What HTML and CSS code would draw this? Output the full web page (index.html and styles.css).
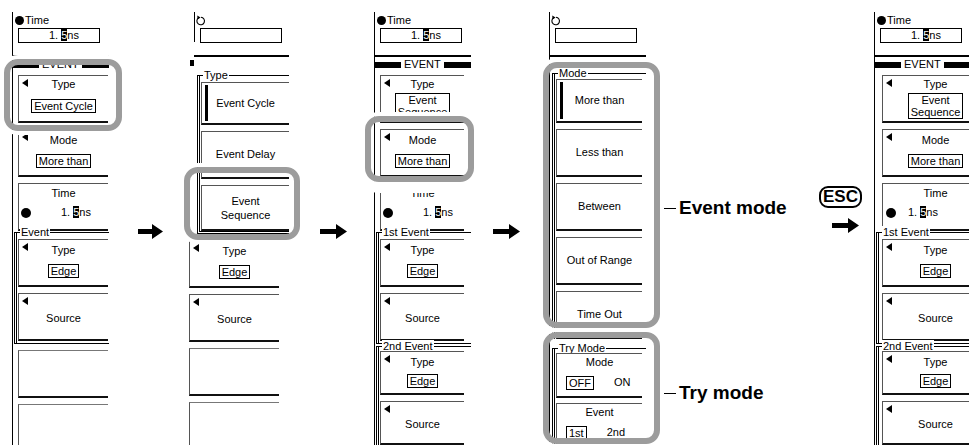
FILE: index.html
```html
<!DOCTYPE html>
<html lang="en">
<head>
  <meta charset="UTF-8">
  <title>Event trigger menus</title>
  <link rel="stylesheet" href="styles.css">
</head>
<body>
  <div class="stage">

    <!-- step 1: event menu, Type highlighted -->
    <section class="panel p1">
      <div class="screen">
        <div class="head">
          <div class="head-label"><i class="dot"></i>Time</div>
          <div class="value-box">1. <span class="cur">5</span>ns</div>
        </div>
        <div class="rule"></div>
        <div class="band"><span class="bar bar-l"></span><span class="band-text">EVENT</span><span class="bar"></span></div>
        <div class="key first">
          <i class="tri"></i>
          <div class="key-title">Type</div>
          <div class="key-value"><span class="boxed">Event Cycle</span></div>
        </div>
        <div class="key">
          <i class="tri"></i>
          <div class="key-title">Mode</div>
          <div class="key-value"><span class="boxed">More than</span></div>
        </div>
        <div class="key key-time">
          <div class="key-title">Time</div>
          <div class="time-row"><i class="dot big"></i><span class="time-val">1. <span class="cur">5</span>ns</span></div>
        </div>
        <div class="group">
          <span class="group-label">Event</span>
          <div class="key">
            <i class="tri"></i>
            <div class="key-title">Type</div>
            <div class="key-value"><span class="boxed">Edge</span></div>
          </div>
          <div class="key key-source">
            <i class="tri"></i>
            <div class="key-title">Source</div>
          </div>
        </div>
        <div class="key blank"></div>
        <div class="key blank"></div>
      </div>
      <div class="ring ring-1"></div>
    </section>

    <div class="arrow a1"><svg width="25" height="15" viewBox="0 0 25 15"><path d="M0 5h14V0l11 7.5L14 15v-5H0z"/></svg></div>

    <!-- step 2: type list popup -->
    <section class="panel p2">
      <div class="screen screen-open">
        <div class="head head-knob">
          <div class="head-label"><svg class="knob" width="10" height="11" viewBox="0 0 10 11"><path d="M2.6 2.8A3.8 3.8 0 1 0 5 2.2" fill="none" stroke="#000" stroke-width="1.1"/><path d="M1.2 0.6L4.6 2.6L1.6 4.6z"/></svg></div>
          <div class="value-box"></div>
        </div>
        <div class="rule"></div>
        <div class="stub"></div>
        <div class="popup">
          <span class="group-label">Type</span>
          <div class="item item-first"><i class="sel"></i>Event Cycle</div>
          <div class="item">Event Delay</div>
          <div class="item item-two">Event<br>Sequence</div>
        </div>
        <div class="under">
          <div class="key">
            <i class="tri"></i>
            <div class="key-title">Type</div>
            <div class="key-value"><span class="boxed">Edge</span></div>
          </div>
          <div class="key key-source">
            <i class="tri"></i>
            <div class="key-title">Source</div>
          </div>
          <div class="key blank"></div>
          <div class="key blank"></div>
        </div>
      </div>
      <div class="ring ring-2"></div>
    </section>

    <div class="arrow a2"><svg width="27" height="15" viewBox="0 0 27 15"><path d="M0 5h16V0l11 7.5L16 15v-5H0z"/></svg></div>

    <!-- step 3: event sequence menu, Mode highlighted -->
    <section class="panel p3">
      <div class="screen">
        <div class="head">
          <div class="head-label"><i class="dot"></i>Time</div>
          <div class="value-box">1. <span class="cur">5</span>ns</div>
        </div>
        <div class="rule"></div>
        <div class="band"><span class="bar bar-l"></span><span class="band-text">EVENT</span><span class="bar"></span></div>
        <div class="key first">
          <i class="tri"></i>
          <div class="key-title">Type</div>
          <div class="key-value"><span class="boxed">Event<br>Sequence</span></div>
        </div>
        <div class="key">
          <i class="tri"></i>
          <div class="key-title">Mode</div>
          <div class="key-value"><span class="boxed">More than</span></div>
        </div>
        <div class="key key-time">
          <div class="key-title">Time</div>
          <div class="time-row"><i class="dot big"></i><span class="time-val">1. <span class="cur">5</span>ns</span></div>
        </div>
        <div class="group">
          <span class="group-label">1st Event</span>
          <div class="key">
            <i class="tri"></i>
            <div class="key-title">Type</div>
            <div class="key-value"><span class="boxed">Edge</span></div>
          </div>
          <div class="key key-source">
            <i class="tri"></i>
            <div class="key-title">Source</div>
          </div>
        </div>
        <div class="group group-2">
          <span class="group-label">2nd Event</span>
          <div class="key">
            <i class="tri"></i>
            <div class="key-title">Type</div>
            <div class="key-value"><span class="boxed">Edge</span></div>
          </div>
          <div class="key key-source">
            <i class="tri"></i>
            <div class="key-title">Source</div>
          </div>
        </div>
      </div>
      <div class="ring ring-3"></div>
    </section>

    <div class="arrow a3"><svg width="27" height="15" viewBox="0 0 27 15"><path d="M0 5h16V0l11 7.5L16 15v-5H0z"/></svg></div>

    <!-- step 4: mode list and try mode -->
    <section class="panel p4">
      <div class="screen screen-open">
        <div class="head head-knob">
          <div class="head-label"><svg class="knob" width="10" height="11" viewBox="0 0 10 11"><path d="M2.6 2.8A3.8 3.8 0 1 0 5 2.2" fill="none" stroke="#000" stroke-width="1.1"/><path d="M1.2 0.6L4.6 2.6L1.6 4.6z"/></svg></div>
          <div class="value-box"></div>
        </div>
        <div class="rule"></div>
        <div class="list">
          <span class="group-label">Mode</span>
          <div class="item item-first"><i class="sel"></i>More than</div>
          <div class="item">Less than</div>
          <div class="item">Between</div>
          <div class="item">Out of Range</div>
          <div class="item">Time Out</div>
        </div>
        <div class="list list-try">
          <span class="group-label">Try Mode</span>
          <div class="item item-pair">
            <div class="pair-title">Mode</div>
            <div class="pair-row"><span class="boxed">OFF</span><span>ON</span></div>
          </div>
          <div class="item item-pair">
            <div class="pair-title">Event</div>
            <div class="pair-row"><span class="boxed">1st</span><span>2nd</span></div>
          </div>
        </div>
      </div>
      <div class="ring ring-4a"></div>
      <div class="ring ring-4b"></div>
    </section>

    <div class="callouts">
      <div class="callout c-mode"><i class="lead"></i>Event mode</div>
      <div class="callout c-try"><i class="lead"></i>Try mode</div>
    </div>

    <div class="esc-col">
      <div class="esc">ESC</div>
      <div class="arrow a4"><svg width="27" height="15" viewBox="0 0 27 15"><path d="M0 5h16V0l11 7.5L16 15v-5H0z"/></svg></div>
    </div>

    <!-- step 5: back to event menu -->
    <section class="panel p5">
      <div class="screen">
        <div class="head">
          <div class="head-label"><i class="dot"></i>Time</div>
          <div class="value-box">1. <span class="cur">5</span>ns</div>
        </div>
        <div class="rule"></div>
        <div class="band"><span class="bar bar-l"></span><span class="band-text">EVENT</span><span class="bar"></span></div>
        <div class="key first">
          <i class="tri"></i>
          <div class="key-title">Type</div>
          <div class="key-value"><span class="boxed">Event<br>Sequence</span></div>
        </div>
        <div class="key">
          <i class="tri"></i>
          <div class="key-title">Mode</div>
          <div class="key-value"><span class="boxed">More than</span></div>
        </div>
        <div class="key key-time">
          <div class="key-title">Time</div>
          <div class="time-row"><i class="dot big"></i><span class="time-val">1. <span class="cur">5</span>ns</span></div>
        </div>
        <div class="group">
          <span class="group-label">1st Event</span>
          <div class="key">
            <i class="tri"></i>
            <div class="key-title">Type</div>
            <div class="key-value"><span class="boxed">Edge</span></div>
          </div>
          <div class="key key-source">
            <i class="tri"></i>
            <div class="key-title">Source</div>
          </div>
        </div>
        <div class="group group-2">
          <span class="group-label">2nd Event</span>
          <div class="key">
            <i class="tri"></i>
            <div class="key-title">Type</div>
            <div class="key-value"><span class="boxed">Edge</span></div>
          </div>
          <div class="key key-source">
            <i class="tri"></i>
            <div class="key-title">Source</div>
          </div>
        </div>
      </div>
    </section>

  </div>
</body>
</html>
```

FILE: styles.css
```css
body {
  margin: 0;
  background: #fff;
  font-family: "Liberation Sans", Arial, sans-serif;
  color: #000;
}

.stage {
  display: flex;
  align-items: flex-start;
  width: 971px;
  height: 445px;
  overflow: hidden;
}

/* ---- menu panels ---- */

.panel {
  --kw: 90px;
  --tv: 30px;
  position: relative;
  flex: none;
  padding-top: 12px;
}

.screen {
  height: 433px;
  overflow: hidden;
  border-left: 1px solid #000;
  font-size: 11px;
  line-height: 13px;
}

.p1 { margin-left: 12px; }
.p1 .screen { width: 96px; }
.p2 { margin-left: 26px; }
.p2 .screen { width: 100px; border-left: none; }
.p3 { --kw: 84px; margin-left: 27px; }
.p3 .screen { width: 96px; }
.p4 { margin-left: 29px; }
.p4 .screen { width: 96px; }
.p5 { --kw: 106px; --tv: 12px; margin-left: 7px; }
.p5 .screen { width: 94px; }

.head {
  height: 30px;
}

.head-label {
  display: flex;
  align-items: center;
  gap: 1px;
  height: 16px;
  margin-left: 2px;
}

.dot {
  display: inline-block;
  width: 9px;
  height: 9px;
  border-radius: 50%;
  background: #000;
}

.dot.big {
  flex: none;
  width: 10px;
  height: 10px;
}

.value-box {
  box-sizing: border-box;
  width: 82px;
  height: 15px;
  margin-left: 5px;
  border: 1px solid #000;
  padding-left: 10px;
  text-align: center;
  line-height: 13px;
}

.cur {
  background: #000;
  color: #fff;
}

.rule {
  height: 2px;
  margin-top: 13px;
  background: #000;
}

.band {
  display: flex;
  align-items: center;
  height: 11px;
  margin-top: 2px;
}

.bar {
  flex: 1;
  height: 6px;
  background: #000;
}

.bar-l {
  flex: none;
  width: 26px;
}

.band-text {
  padding: 0 3px;
  line-height: 11px;
}

/* ---- soft keys ---- */

.key {
  position: relative;
  box-sizing: border-box;
  display: flex;
  flex-direction: column;
  width: var(--kw);
  height: 48px;
  margin: 6px 0 0 5px;
  border-top: 1px solid #555;
  border-left: 1px solid #555;
  border-bottom: 2px solid #111;
  text-align: center;
}

.key.first {
  margin-top: 5px;
}

.key.first .key-title {
  padding-top: 1px;
}

.p5 .key {
  margin-left: 7px;
}

.tri {
  position: absolute;
  left: 3px;
  top: 3px;
  width: 0;
  height: 0;
  border-top: 4px solid transparent;
  border-bottom: 4px solid transparent;
  border-right: 6px solid #000;
}

.key-title {
  padding-top: 3px;
  line-height: 14px;
}

.key-value {
  flex: 1;
  display: flex;
  align-items: center;
  justify-content: center;
}

.boxed {
  border: 1px solid #000;
  padding: 0 2px;
  line-height: 12px;
}

.key-time .key-title {
  padding-top: 2px;
}

.time-row {
  display: flex;
  align-items: center;
  margin-top: 6px;
  padding-left: 2px;
}

.p5 .time-row {
  padding-left: 3px;
}

.time-val {
  margin-left: var(--tv);
}

.key-source .key-title {
  padding-top: 17px;
}

.blank {
  border-top-color: #777;
}

.group {
  position: relative;
  margin: 1px 0 0 1px;
  padding: 0 0 2px;
  border-top: 1px solid #000;
  border-left: 3px double #000;
  border-bottom: 1px solid #000;
}

.group .key {
  margin-left: 1px;
}

.p5 .group .key {
  margin-left: 3px;
}

.group-2 {
  margin-top: 2px;
  border-bottom: none;
}

.group-2 .key {
  height: 44px;
  margin-top: 4px;
}

.group-2 .key-source {
  margin-top: 6px;
}

.group-2 .key-source .key-title {
  padding-top: 15px;
}

.group-label {
  position: absolute;
  top: -7px;
  left: 3px;
  padding: 0 1px;
  background: #fff;
  line-height: 13px;
}

/* ---- popup lists ---- */

.head-knob .head-label {
  margin-left: 1px;
}

.p2 .head {
  margin-left: 5px;
  border-left: 1px solid #000;
}

.p2 .rule {
  margin-left: 5px;
}

.stub {
  width: 4px;
  height: 6px;
  margin: 3px 0 0 1px;
  background: #000;
}

.popup {
  position: relative;
  margin: 9px 0 0 8px;
  border-top: 1px solid #000;
  border-left: 3px double #000;
  border-bottom: 3px double #000;
}

.item {
  position: relative;
  box-sizing: border-box;
  display: flex;
  align-items: center;
  justify-content: center;
  width: 88px;
  height: 48px;
  margin: 6px 0 0 1px;
  border-top: 1px solid #555;
  border-left: 1px solid #555;
  border-bottom: 2px solid #111;
  text-align: center;
}

.item-first {
  height: 43px;
}

.item-two {
  height: 46px;
  line-height: 14px;
}

.sel {
  position: absolute;
  left: 3px;
  top: 2px;
  bottom: 2px;
  width: 3px;
  background: #000;
}

.under .key {
  margin-left: 0;
}

.list {
  position: relative;
  margin: 16px 0 0 2px;
  border-top: 1px solid #000;
  border-left: 3px double #000;
}

.list .item {
  width: 86px;
  margin-left: 1px;
}

.list .item-first {
  margin-top: 5px;
  height: 44px;
}

.list-try {
  margin-top: 9px;
}

.item-pair {
  flex-direction: column;
  justify-content: flex-start;
  align-items: stretch;
  height: 45px;
}

.list-try .item-pair {
  margin-top: 5px;
}

.list-try .item-pair:first-of-type {
  margin-top: 4px;
}

.pair-title {
  padding-top: 2px;
  line-height: 13px;
}

.pair-row {
  display: flex;
  gap: 20px;
  margin-top: 7px;
  padding-left: 9px;
}

/* ---- highlight rings ---- */

.ring {
  position: absolute;
  box-sizing: border-box;
  border: 6px solid #9c9c9c;
  border-radius: 14px;
  box-shadow: 0 0 0 4px #fff;
}

.ring-1 { left: -8px; top: 59px; width: 118px; height: 72px; }
.ring-2 { left: -5px; top: 167px; width: 116px; height: 73px; }
.ring-3 {
  left: -9px;
  top: 116px;
  width: 109px;
  height: 66px;
  box-shadow: 0 0 0 4px #fff, 0 7px 0 4px #fff;
}
.ring-4a { left: -6px; top: 62px; width: 117px; height: 266px; }
.ring-4b { left: -6px; top: 332px; width: 117px; height: 112px; }

/* ---- arrows and callouts ---- */

.arrow {
  flex: none;
  line-height: 0;
}

.a1 { margin: 224px 0 0 29px; }
.a2 { margin: 224px 0 0 31px; }
.a3 { margin: 224px 0 0 22px; }

.callouts {
  flex: none;
  width: 158px;
  margin-left: 15px;
  padding-top: 197px;
}

.callout {
  display: flex;
  align-items: center;
  gap: 3px;
  height: 22px;
  font-size: 19px;
  font-weight: bold;
}

.lead {
  width: 15px;
  height: 1px;
  background: #000;
}

.c-try {
  margin-top: 163px;
}

.esc-col {
  flex: none;
  width: 48px;
  padding-top: 186px;
}

.esc {
  box-sizing: border-box;
  width: 43px;
  height: 22px;
  border: 2px solid #000;
  border-radius: 9px;
  font-size: 17px;
  font-weight: bold;
  line-height: 18px;
  text-align: center;
}

.a4 {
  margin: 10px 0 0 13px;
}
```
